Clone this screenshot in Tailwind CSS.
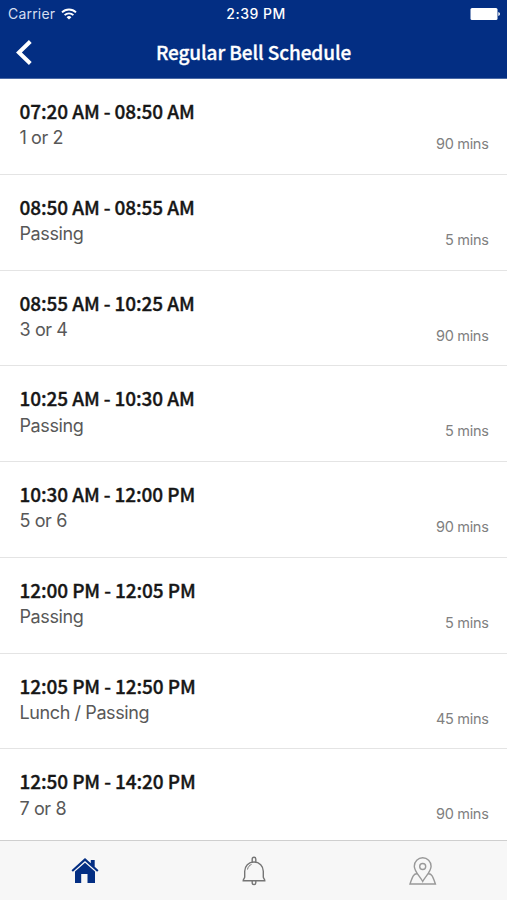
<!DOCTYPE html>
<html lang="en">
<head>
    <meta charset="UTF-8">
    <meta name="viewport" content="width=device-width, initial-scale=1.0">
    <title>Regular Bell Schedule</title>
    <script src="https://cdn.jsdelivr.net/npm/@tailwindcss/browser@4"></script>
</head>
<body class="bg-white font-[Inter,sans-serif] h-screen flex flex-col overflow-hidden">

    <!-- Header -->
    <header class="bg-[#032e83] text-white h-[79px] shrink-0 border-b border-[#4a69a5]">
        <!-- Status bar -->
        <div class="grid grid-cols-3 items-center h-7 pl-2 pr-[7px] text-sm">
            <div class="flex items-center gap-[6px] text-[#d5def0]">
                <span class="tracking-[0.2px]">Carrier</span>
                <svg class="w-4 h-3" viewBox="0 0 16 12" fill="none" stroke="white" stroke-width="1.9">
                    <path d="M1 4.4a10 10 0 0 1 14 0M3.6 7.2a6.2 6.2 0 0 1 8.8 0" />
                    <path d="M8 11.6 5.6 9.2a3.4 3.4 0 0 1 4.8 0z" fill="white" stroke="none" />
                </svg>
            </div>
            <span class="text-center font-medium tracking-[0.5px] pl-1">2:39 PM</span>
            <svg class="w-[30px] h-3 justify-self-end" viewBox="0 0 30 12" fill="white">
                <rect x="0.5" y="0" width="27" height="12" rx="1.5" />
                <path d="M28.3 4q1.7.6 1.7 2t-1.7 2z" />
            </svg>
        </div>
        <!-- Nav bar -->
        <div class="relative flex items-center justify-center h-[47px]">
            <svg class="absolute left-4 top-3 w-4 h-[25px]" viewBox="0 0 16 25" fill="none" stroke="white" stroke-width="4">
                <path d="M14.3 1.5 2.9 12.5 14.3 23.5" />
            </svg>
            <h1 class="font-['Noto_Sans_CJK_JP',sans-serif] font-medium text-[19px] leading-6 tracking-[-0.1px] [-webkit-text-stroke:0.3px]">Regular Bell Schedule</h1>
        </div>
    </header>

    <!-- Periods -->
    <main id="schedule" class="grow min-h-0 overflow-hidden"></main>

    <template id="period">
        <div class="relative h-[95.75px] border-b border-[#e4e4e4] px-[19.5px] pt-5">
            <h2 class="font-['Noto_Sans_CJK_JP',sans-serif] font-medium text-[19px] leading-6 tracking-[-0.1px] [-webkit-text-stroke:0.35px] text-[#161616]"></h2>
            <p class="mt-[1.25px] text-lg leading-7 tracking-[-0.4px] text-[#585858]"></p>
            <span class="absolute right-[18.5px] top-[55px] text-[14.5px] leading-5 tracking-[-0.3px] text-[#808080]"></span>
        </div>
    </template>

    <!-- Tab bar -->
    <nav class="grid grid-cols-3 shrink-0 h-[60px] bg-[#f7f7f7] border-t border-[#cfcfcf]">
        <a class="flex items-center justify-center">
            <svg class="w-7 h-[26px]" viewBox="0 0 28 26" fill="#032e83">
                <path d="M14 0 .5 12.2l1.4 1.5L14 3l12.1 10.7 1.4-1.5-3.8-3.4V2h-3.9v3.3z" />
                <path d="M14 4.8 4 13.6V25h6.2v-9h6.3v9H24V13.6z" />
            </svg>
        </a>
        <a class="flex items-center justify-center">
            <svg class="w-6 h-[30px]" viewBox="0 0 24 30" fill="none" stroke="#757575" stroke-width="1.4">
                <path d="M10.2 6V3a1.8 1.8 0 0 1 3.6 0V6" />
                <path d="M12 6c-5.5 0-9.3 4-9.3 9.3V21c0 1.5-1.5 2-1.5 3.8h21.6c0-1.8-1.5-2.3-1.5-3.8V15.3C21.3 10 17.5 6 12 6z" />
                <path d="M5.5 13.5c.5-2.7 2-4.3 4-5" stroke-width="1" />
                <path d="M10.2 25v1.8a1.8 1.8 0 0 0 3.6 0V25" />
            </svg>
        </a>
        <a class="flex items-center justify-center">
            <svg class="w-7 h-7" viewBox="0 0 28 28" fill="none" stroke="#999" stroke-width="1.4">
                <path d="M13.7 24.5C11 19.5 5.3 14.5 5.3 9.2a8.4 8.4 0 0 1 16.8 0c0 5.3-5.7 10.3-8.4 15.3z" />
                <circle cx="13.7" cy="9.5" r="3" />
                <path d="M8.3 16.8C4.8 16.3 3.5 19.5 1 27h25.4c-2.5-7.5-3.8-10.7-7.3-10.2" />
            </svg>
        </a>
    </nav>

    <script>
        const periods = [
            ["07:20 AM - 08:50 AM", "1 or 2", 90],
            ["08:50 AM - 08:55 AM", "Passing", 5],
            ["08:55 AM - 10:25 AM", "3 or 4", 90],
            ["10:25 AM - 10:30 AM", "Passing", 5],
            ["10:30 AM - 12:00 PM", "5 or 6", 90],
            ["12:00 PM - 12:05 PM", "Passing", 5],
            ["12:05 PM - 12:50 PM", "Lunch / Passing", 45],
            ["12:50 PM - 14:20 PM", "7 or 8", 90],
        ];
        const template = document.getElementById("period");

        periods.forEach(([time, name, mins]) => {
            const row = template.content.cloneNode(true);
            row.querySelector("h2").textContent = time;
            row.querySelector("p").textContent = name;
            row.querySelector("span").textContent = mins + " mins";
            document.getElementById("schedule").appendChild(row);
        });
    </script>
</body>
</html>
